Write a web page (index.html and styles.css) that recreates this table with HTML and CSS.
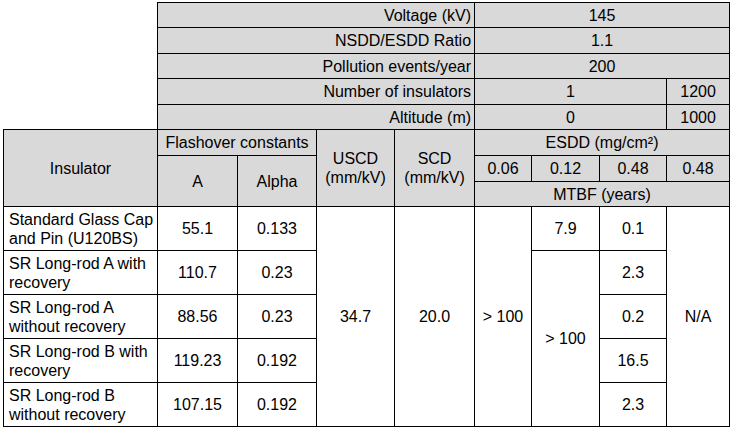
FILE: index.html
```html
<!DOCTYPE html>
<html>
<head>
<meta charset="utf-8">
<link rel="stylesheet" href="styles.css">
</head>
<body>
<table class="grid">
  <colgroup>
    <col class="c-ins">
    <col class="c-a">
    <col class="c-alpha">
    <col class="c-uscd">
    <col class="c-scd">
    <col class="c-e1">
    <col class="c-e2">
    <col class="c-e3">
    <col class="c-e4">
  </colgroup>
  <tbody>
    <tr class="h25">
      <td class="blank" rowspan="5"></td>
      <td class="param" colspan="4">Voltage (kV)</td>
      <td class="pval" colspan="4">145</td>
    </tr>
    <tr class="h26">
      <td class="param" colspan="4">NSDD/ESDD Ratio</td>
      <td class="pval" colspan="4">1.1</td>
    </tr>
    <tr class="h25">
      <td class="param" colspan="4">Pollution events/year</td>
      <td class="pval" colspan="4">200</td>
    </tr>
    <tr class="h26">
      <td class="param" colspan="4">Number of insulators</td>
      <td class="pval" colspan="3">1</td>
      <td class="pval">1200</td>
    </tr>
    <tr class="h25">
      <td class="param" colspan="4">Altitude (m)</td>
      <td class="pval" colspan="3">0</td>
      <td class="pval">1000</td>
    </tr>
    <tr class="h26">
      <td class="hd" rowspan="3">Insulator</td>
      <td class="hd" colspan="2">Flashover constants</td>
      <td class="hd" rowspan="3">USCD<br>(mm/kV)</td>
      <td class="hd" rowspan="3">SCD<br>(mm/kV)</td>
      <td class="hd" colspan="4">ESDD (mg/cm²)</td>
    </tr>
    <tr class="h26">
      <td class="hd" rowspan="2">A</td>
      <td class="hd" rowspan="2">Alpha</td>
      <td class="hd">0.06</td>
      <td class="hd">0.12</td>
      <td class="hd">0.48</td>
      <td class="hd">0.48</td>
    </tr>
    <tr class="h25">
      <td class="hd" colspan="4">MTBF (years)</td>
    </tr>
    <tr class="h44">
      <td class="name">Standard Glass Cap and Pin (U120BS)</td>
      <td class="val">55.1</td>
      <td class="val">0.133</td>
      <td class="val" rowspan="5">34.7</td>
      <td class="val" rowspan="5">20.0</td>
      <td class="val" rowspan="5">&gt; 100</td>
      <td class="val">7.9</td>
      <td class="val">0.1</td>
      <td class="val" rowspan="5">N/A</td>
    </tr>
    <tr class="h44">
      <td class="name">SR Long-rod A with recovery</td>
      <td class="val">110.7</td>
      <td class="val">0.23</td>
      <td class="val" rowspan="4">&gt; 100</td>
      <td class="val">2.3</td>
    </tr>
    <tr class="h44">
      <td class="name">SR Long-rod A without recovery</td>
      <td class="val">88.56</td>
      <td class="val">0.23</td>
      <td class="val">0.2</td>
    </tr>
    <tr class="h44">
      <td class="name">SR Long-rod B with recovery</td>
      <td class="val">119.23</td>
      <td class="val">0.192</td>
      <td class="val">16.5</td>
    </tr>
    <tr class="h44">
      <td class="name">SR Long-rod B without recovery</td>
      <td class="val">107.15</td>
      <td class="val">0.192</td>
      <td class="val">2.3</td>
    </tr>
  </tbody>
</table>
</body>
</html>
```

FILE: styles.css
```css
html, body {
  margin: 0;
  padding: 0;
  background: #ffffff;
}

body {
  font-family: "Liberation Sans", Arial, sans-serif;
  font-size: 16px;
  color: #000000;
}

.grid {
  border-collapse: collapse;
  table-layout: fixed;
  width: 726px;
  margin: 2px 0 0 3px;
}

.c-ins { width: 154px; }
.c-a { width: 80px; }
.c-alpha { width: 79px; }
.c-uscd { width: 78px; }
.c-scd { width: 80px; }
.c-e1 { width: 57px; }
.c-e2 { width: 68px; }
.c-e3 { width: 67px; }
.c-e4 { width: 63px; }

.grid td {
  border: 1px solid #000000;
  padding: 0 2px;
  vertical-align: middle;
  text-align: center;
  line-height: 19px;
}

.grid td.blank {
  border: none;
  background: transparent;
}

.h25 { height: 25px; }
.h26 { height: 26px; }
.h44 { height: 44px; }

.grid td.param {
  background: #d9d9d9;
  text-align: right;
  padding-right: 3px;
}

.pval { background: #d9d9d9; }

.hd { background: #d9d9d9; }

.grid td.name {
  text-align: left;
  padding: 0 2px 0 5px;
}

.val { background: #ffffff; }
```
